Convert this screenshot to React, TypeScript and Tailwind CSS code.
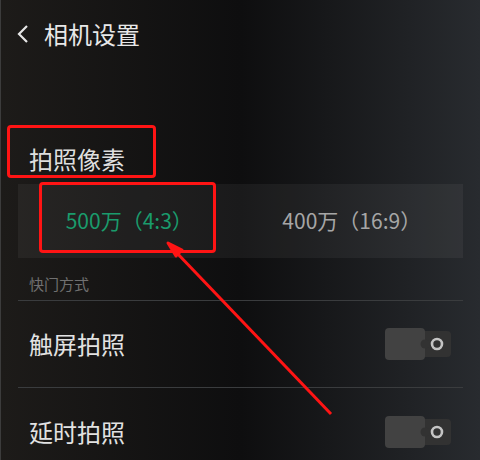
import React from 'react';

const cjk = { fontFamily: '"Noto Sans CJK SC", "Noto Sans", sans-serif' };

const Toggle: React.FC = () => (
  <svg width="66" height="32" viewBox="0 0 66 32" className="shrink-0">
    <rect x="31" y="3" width="35" height="26" rx="4" fill="#323232" />
    <rect x="0" y="0" width="40" height="32" rx="4" fill="#424242" />
    <circle cx="40" cy="16" r="4.5" fill="#323232" />
    <circle cx="52" cy="16" r="5" fill="none" stroke="#c4c4c4" strokeWidth="2.6" />
  </svg>
);

const SwitchRow: React.FC<{ label: string; last?: boolean }> = ({ label, last }) => (
  <div className={`flex items-center justify-between h-[87px] pl-[11px] pr-[12px] ${last ? '' : 'border-b border-[#3a3c3e]'}`}>
    <span className="text-[24px] leading-none text-[#e2e2e2]">{label}</span>
    <Toggle />
  </div>
);

export default function App() {
  return (
    <div
      className="relative w-[480px] h-[460px] overflow-hidden border-l border-[#3c3c3c] bg-gradient-to-r from-[#1d1b19] via-[#0e0e0f] to-[#282b2f]"
      style={cjk}
    >
      {/* header */}
      <div className="flex items-center gap-[14px] h-[68px] pl-[15px]">
        <svg width="14" height="22" viewBox="0 0 14 22">
          <path d="M11 3 L3 11 L11 19" fill="none" stroke="#e6e6e6" strokeWidth="2.2" />
        </svg>
        <span className="text-[24px] leading-none text-[#e8e8e8]">相机设置</span>
      </div>

      <div className="px-[17px]">
        <div className="pt-[76px] pl-[11px] pb-[10px]">
          <span className="block text-[24px] leading-[30px] text-[#dedede]">拍照像素</span>
        </div>

        {/* resolution segmented */}
        <div className="flex h-[74px] bg-[#ffffff0d]">
          <div className="flex-1 flex items-center justify-center text-[21px] text-[#1a9b6c]">500万（4:3）</div>
          <div className="flex-1 flex items-center justify-center text-[21px] text-[#a6a6a6]">400万（16:9）</div>
        </div>

        <div className="h-[43px] flex items-end pb-[9px] pl-[11px] border-b border-[#3a3c3e]">
          <span className="text-[15px] leading-none text-[#707070]">快门方式</span>
        </div>

        <SwitchRow label="触屏拍照" />
        <SwitchRow label="延时拍照" last />
      </div>

      {/* annotations */}
      <div className="absolute left-[6px] top-[125px] w-[149px] h-[53px] border-[3px] border-[#ff1414] rounded-[4px]" />
      <div className="absolute left-[38px] top-[182px] w-[177px] h-[71px] border-[3px] border-[#ff1414] rounded-[4px]" />
      <svg className="absolute left-0 top-0" width="480" height="460" viewBox="0 0 480 460">
        <line x1="330" y1="414" x2="174" y2="251" stroke="#ff1414" strokeWidth="3" />
        <path d="M167 243 L181 250 L175 256 Z" fill="#ff1414" stroke="#ff1414" strokeWidth="3" strokeLinejoin="round" />
      </svg>
    </div>
  );
}
